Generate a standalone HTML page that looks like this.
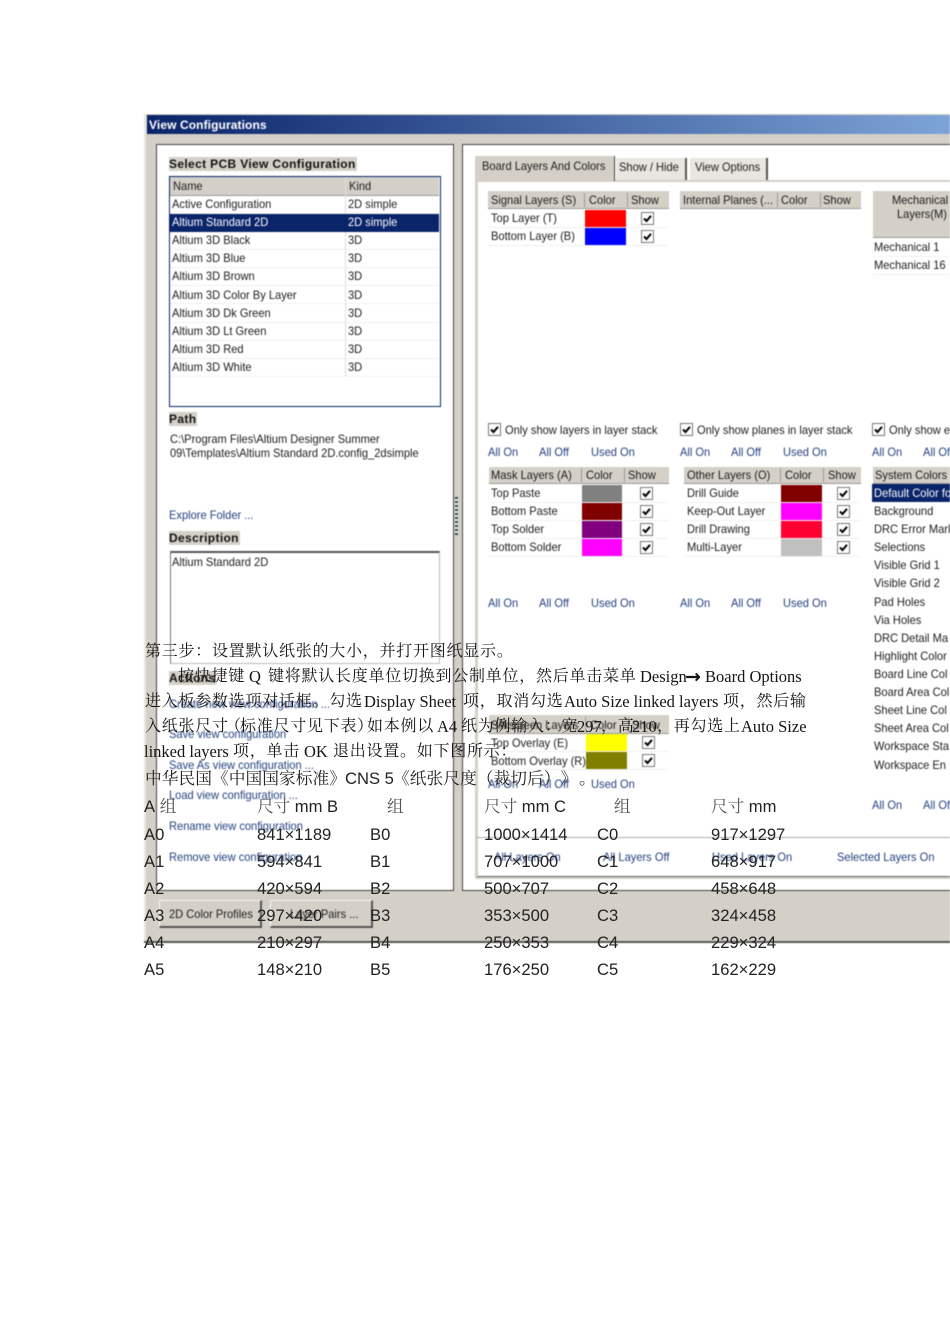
<!DOCTYPE html>
<html><head><meta charset="utf-8">
<style>
html,body{margin:0;padding:0;background:#fff}
#p{position:relative;width:950px;height:1344px;overflow:hidden;background:#fff}
#d{position:absolute;left:0;top:0;width:950px;height:1344px;overflow:hidden;filter:blur(.4px)}
.r{position:absolute}
.t{position:absolute;font:12px/14px "Liberation Sans",sans-serif;height:14px;white-space:nowrap;color:#1c1c1c;transform:scaleX(.925);transform-origin:0 50%}
.l{color:#24407f}
.b{transform:none;font-weight:bold;letter-spacing:.35px;background:#d4d0c8;color:#111;padding-right:1px}
.h{position:absolute;background:#d4d0c8;border-bottom:1px solid #999}
.s{position:absolute;width:1px;background:#999}
.g{position:absolute;height:1px;background:#efefef}
svg.c{position:absolute;width:13px;height:13px}
.x,.z{position:absolute;margin-top:1px;font:16px/20px "Liberation Serif","Noto Serif CJK SC",serif;letter-spacing:.75px;white-space:nowrap;color:#151515;font-kerning:none;text-spacing-trim:space-all}
.z{font-size:16.5px;letter-spacing:0}
.y{position:absolute;font:16.6px/20px "Liberation Sans","Noto Serif CJK SC",sans-serif;white-space:nowrap;color:#222;font-kerning:none;text-spacing-trim:space-all}
.u{color:#555}
</style></head><body><div id="p">
<svg width="0" height="0" style="position:absolute"><defs><g id="k"><rect x=".5" y=".5" width="12" height="12" fill="#fff" stroke="#777"/><path d="M3 6.5l2.5 2.5L10 3.8" fill="none" stroke="#000" stroke-width="2"/></g></defs></svg>
<div id="d">
<div class="r" style="left:144px;top:114px;width:806px;height:827px;background:#d4d0c8;border-bottom:2px solid #555"></div>
<div class="r" style="left:144px;top:114px;width:2px;height:827px;background:#e8e6e0"></div>
<div class="r" style="left:147px;top:115px;width:803px;height:19px;background:linear-gradient(90deg,#0a246a,#7da4d8)"></div>
<span class="t" style="left:149px;top:118px;transform:none;letter-spacing:.1px;font-weight:bold;color:#fff">View Configurations</span>

<div class="r" style="left:156px;top:144px;width:296px;height:745px;background:#fff;border:1px solid #444"></div>
<span class="t b" style="left:169px;top:157px">Select PCB View Configuration</span>
<div class="r" style="left:169px;top:176px;width:270px;height:229px;border:1px solid #0a246a;background:#fff"></div>
<div class="h" style="left:170px;top:177px;width:269px;height:18px"></div>
<div class="s" style="left:345px;top:177px;height:199px;background:#ddd"></div>
<div class="r" style="left:170px;top:214px;width:269px;height:18px;background:#0a246a"></div>
<div class="g" style="left:170px;top:213px;width:269px"></div><div class="g" style="left:170px;top:249px;width:269px"></div><div class="g" style="left:170px;top:267px;width:269px"></div><div class="g" style="left:170px;top:285px;width:269px"></div><div class="g" style="left:170px;top:303px;width:269px"></div><div class="g" style="left:170px;top:322px;width:269px"></div><div class="g" style="left:170px;top:340px;width:269px"></div><div class="g" style="left:170px;top:358px;width:269px"></div><div class="g" style="left:170px;top:376px;width:269px"></div>
<span class="t" style="left:173px;top:179px">Name</span><span class="t" style="left:349px;top:179px">Kind</span>
<span class="t" style="left:172px;top:197px">Active Configuration</span><span class="t" style="left:348px;top:197px">2D simple</span>
<span class="t" style="left:172px;top:215px;color:#fff">Altium Standard 2D</span><span class="t" style="left:348px;top:215px;color:#fff">2D simple</span>
<span class="t" style="left:172px;top:233px">Altium 3D Black</span><span class="t" style="left:348px;top:233px">3D</span>
<span class="t" style="left:172px;top:251px">Altium 3D Blue</span><span class="t" style="left:348px;top:251px">3D</span>
<span class="t" style="left:172px;top:269px">Altium 3D Brown</span><span class="t" style="left:348px;top:269px">3D</span>
<span class="t" style="left:172px;top:288px">Altium 3D Color By Layer</span><span class="t" style="left:348px;top:288px">3D</span>
<span class="t" style="left:172px;top:306px">Altium 3D Dk Green</span><span class="t" style="left:348px;top:306px">3D</span>
<span class="t" style="left:172px;top:324px">Altium 3D Lt Green</span><span class="t" style="left:348px;top:324px">3D</span>
<span class="t" style="left:172px;top:342px">Altium 3D Red</span><span class="t" style="left:348px;top:342px">3D</span>
<span class="t" style="left:172px;top:360px">Altium 3D White</span><span class="t" style="left:348px;top:360px">3D</span>
<span class="t b" style="left:169px;top:412px">Path</span>
<span class="t" style="left:170px;top:432px">C:\Program Files\Altium Designer Summer</span>
<span class="t" style="left:170px;top:446px">09\Templates\Altium Standard 2D.config_2dsimple</span>
<span class="t l" style="left:169px;top:508px">Explore Folder ...</span>
<span class="t b" style="left:169px;top:531px">Description</span>
<div class="r" style="left:170px;top:551px;width:268px;height:110px;border:1px solid #bbb;border-top:2px solid #555;border-left:1px solid #777;background:#fff"></div>
<span class="t" style="left:172px;top:555px">Altium Standard 2D</span>
<span class="t b" style="left:169px;top:671px">Actions</span>
<span class="t l" style="left:169px;top:697px">Create new view configuration ...</span>
<span class="t l" style="left:169px;top:727px">Save view configuration</span>
<span class="t l" style="left:169px;top:758px">Save As view configuration ...</span>
<span class="t l" style="left:169px;top:788px">Load view configuration ...</span>
<span class="t l" style="left:169px;top:819px">Rename view configuration</span>
<span class="t l" style="left:169px;top:850px">Remove view configuration</span>

<div class="r" style="left:455px;top:497px;width:3px;height:38px;background:repeating-linear-gradient(180deg,#33504a 0 2px,#e6efe9 2px 4px)"></div>

<div class="r" style="left:462px;top:144px;width:490px;height:745px;background:#fff;border:1px solid #444"></div>
<div class="r" style="left:475px;top:180px;width:480px;height:698px;background:#fff;border-left:3px solid #d4d0c8;border-top:2px solid #d4d0c8;box-sizing:border-box;border-bottom:2px solid #666"></div>
<div class="r" style="left:476px;top:877px;width:474px;height:2px;background:#d4d0c8"></div>
<div class="r" style="left:475px;top:156px;width:140px;height:25px;background:#d4d0c8;border-right:1px solid #444;box-sizing:border-box"></div>
<div class="r" style="left:616px;top:158px;width:71px;height:22px;background:#e8e6e0;border-right:2px solid #555;box-sizing:border-box"></div>
<div class="r" style="left:690px;top:158px;width:78px;height:22px;background:#e8e6e0;border-right:2px solid #555;box-sizing:border-box"></div>
<span class="t" style="left:482px;top:159px">Board Layers And Colors</span>
<span class="t" style="left:619px;top:160px">Show / Hide</span>
<span class="t" style="left:695px;top:160px">View Options</span>

<!-- Signal -->
<div class="h" style="left:488px;top:191px;width:181px;height:17px"></div><div class="s" style="left:584px;top:193px;height:14px"></div><div class="s" style="left:627px;top:193px;height:14px"></div>
<span class="t" style="left:491px;top:193px">Signal Layers (S)</span><span class="t" style="left:589px;top:193px">Color</span><span class="t" style="left:631px;top:193px">Show</span>
<span class="t" style="left:491px;top:211px">Top Layer (T)</span><span class="t" style="left:491px;top:229px">Bottom Layer (B)</span>
<div class="r" style="left:585px;top:210px;width:41px;height:17px;background:#f00"></div><div class="r" style="left:585px;top:228px;width:41px;height:17px;background:#00f"></div>
<div class="g" style="left:488px;top:227px;width:181px"></div><div class="g" style="left:488px;top:245px;width:181px"></div>
<svg class="c" style="left:641px;top:212px"><use href="#k"/></svg><svg class="c" style="left:641px;top:230px"><use href="#k"/></svg>
<!-- Internal -->
<div class="h" style="left:680px;top:191px;width:181px;height:17px"></div><div class="s" style="left:777px;top:193px;height:14px"></div><div class="s" style="left:820px;top:193px;height:14px"></div>
<span class="t" style="left:683px;top:193px">Internal Planes (...</span><span class="t" style="left:781px;top:193px">Color</span><span class="t" style="left:823px;top:193px">Show</span>
<!-- Mechanical -->
<div class="h" style="left:873px;top:191px;width:77px;height:46px"></div>
<span class="t" style="left:892px;top:193px">Mechanical</span><span class="t" style="left:897px;top:207px">Layers(M)</span>
<span class="t" style="left:874px;top:240px">Mechanical 1</span><span class="t" style="left:874px;top:258px">Mechanical 16</span>
<div class="g" style="left:873px;top:256px;width:77px"></div><div class="g" style="left:873px;top:274px;width:77px"></div>

<svg class="c" style="left:488px;top:423px"><use href="#k"/></svg><span class="t" style="left:505px;top:423px">Only show layers in layer stack</span>
<svg class="c" style="left:680px;top:423px"><use href="#k"/></svg><span class="t" style="left:697px;top:423px">Only show planes in layer stack</span>
<svg class="c" style="left:872px;top:423px"><use href="#k"/></svg><span class="t" style="left:889px;top:423px">Only show e</span>
<span class="t l" style="left:488px;top:445px">All On</span><span class="t l" style="left:539px;top:445px">All Off</span><span class="t l" style="left:591px;top:445px">Used On</span>
<span class="t l" style="left:680px;top:445px">All On</span><span class="t l" style="left:731px;top:445px">All Off</span><span class="t l" style="left:783px;top:445px">Used On</span>
<span class="t l" style="left:872px;top:445px">All On</span><span class="t l" style="left:923px;top:445px">All Off</span>

<!-- Mask -->
<div class="h" style="left:489px;top:467px;width:180px;height:16px"></div><div class="s" style="left:581px;top:468px;height:14px"></div><div class="s" style="left:624px;top:468px;height:14px"></div>
<span class="t" style="left:491px;top:468px">Mask Layers (A)</span><span class="t" style="left:586px;top:468px">Color</span><span class="t" style="left:628px;top:468px">Show</span>
<span class="t" style="left:491px;top:486px">Top Paste</span><span class="t" style="left:491px;top:504px">Bottom Paste</span><span class="t" style="left:491px;top:522px">Top Solder</span><span class="t" style="left:491px;top:540px">Bottom Solder</span>
<div class="r" style="left:582px;top:485px;width:40px;height:17px;background:#808080"></div><div class="r" style="left:582px;top:503px;width:40px;height:17px;background:#800000"></div><div class="r" style="left:582px;top:521px;width:40px;height:17px;background:#800080"></div><div class="r" style="left:582px;top:539px;width:40px;height:17px;background:#f0f"></div>
<div class="g" style="left:489px;top:502px;width:180px"></div><div class="g" style="left:489px;top:520px;width:180px"></div><div class="g" style="left:489px;top:538px;width:180px"></div><div class="g" style="left:489px;top:556px;width:180px"></div>
<svg class="c" style="left:640px;top:487px"><use href="#k"/></svg><svg class="c" style="left:640px;top:505px"><use href="#k"/></svg><svg class="c" style="left:640px;top:523px"><use href="#k"/></svg><svg class="c" style="left:640px;top:541px"><use href="#k"/></svg>
<!-- Other -->
<div class="h" style="left:684px;top:467px;width:177px;height:16px"></div><div class="s" style="left:780px;top:468px;height:14px"></div><div class="s" style="left:823px;top:468px;height:14px"></div>
<span class="t" style="left:687px;top:468px">Other Layers (O)</span><span class="t" style="left:785px;top:468px">Color</span><span class="t" style="left:828px;top:468px">Show</span>
<span class="t" style="left:687px;top:486px">Drill Guide</span><span class="t" style="left:687px;top:504px">Keep-Out Layer</span><span class="t" style="left:687px;top:522px">Drill Drawing</span><span class="t" style="left:687px;top:540px">Multi-Layer</span>
<div class="r" style="left:781px;top:485px;width:41px;height:17px;background:#800000"></div><div class="r" style="left:781px;top:503px;width:41px;height:17px;background:#f0f"></div><div class="r" style="left:781px;top:521px;width:41px;height:17px;background:#ff0033"></div><div class="r" style="left:781px;top:539px;width:41px;height:17px;background:#c0c0c0"></div>
<div class="g" style="left:684px;top:502px;width:177px"></div><div class="g" style="left:684px;top:520px;width:177px"></div><div class="g" style="left:684px;top:538px;width:177px"></div><div class="g" style="left:684px;top:556px;width:177px"></div>
<svg class="c" style="left:837px;top:487px"><use href="#k"/></svg><svg class="c" style="left:837px;top:505px"><use href="#k"/></svg><svg class="c" style="left:837px;top:523px"><use href="#k"/></svg><svg class="c" style="left:837px;top:541px"><use href="#k"/></svg>
<!-- System -->
<div class="h" style="left:873px;top:467px;width:77px;height:16px"></div><span class="t" style="left:875px;top:468px">System Colors |</span>
<div class="r" style="left:872px;top:484px;width:78px;height:18px;background:#0a246a"></div>
<span class="t" style="left:874px;top:486px;color:#fff">Default Color fo</span>
<span class="t" style="left:874px;top:504px">Background</span><span class="t" style="left:874px;top:522px">DRC Error Mark</span><span class="t" style="left:874px;top:540px">Selections</span><span class="t" style="left:874px;top:558px">Visible Grid 1</span><span class="t" style="left:874px;top:576px">Visible Grid 2</span><span class="t" style="left:874px;top:595px">Pad Holes</span><span class="t" style="left:874px;top:613px">Via Holes</span><span class="t" style="left:874px;top:631px">DRC Detail Ma</span><span class="t" style="left:874px;top:649px">Highlight Color</span><span class="t" style="left:874px;top:667px">Board Line Col</span><span class="t" style="left:874px;top:685px">Board Area Col</span><span class="t" style="left:874px;top:703px">Sheet Line Col</span><span class="t" style="left:874px;top:721px">Sheet Area Col</span><span class="t" style="left:874px;top:739px">Workspace Sta</span><span class="t" style="left:874px;top:758px">Workspace En</span>
<span class="t l" style="left:488px;top:596px">All On</span><span class="t l" style="left:539px;top:596px">All Off</span><span class="t l" style="left:591px;top:596px">Used On</span>
<span class="t l" style="left:680px;top:596px">All On</span><span class="t l" style="left:731px;top:596px">All Off</span><span class="t l" style="left:783px;top:596px">Used On</span>
<span class="t l" style="left:872px;top:798px">All On</span><span class="t l" style="left:923px;top:798px">All Off</span>
<!-- Silkscreen -->
<div class="h" style="left:489px;top:715px;width:180px;height:18px"></div><div class="s" style="left:585px;top:717px;height:14px"></div><div class="s" style="left:628px;top:717px;height:14px"></div>
<span class="t" style="left:491px;top:718px">Silkscreen Layers</span><span class="t" style="left:590px;top:718px">Color</span><span class="t" style="left:632px;top:718px">Show</span>
<span class="t" style="left:491px;top:736px">Top Overlay (E)</span><span class="t" style="left:491px;top:754px">Bottom Overlay (R)</span>
<div class="r" style="left:586px;top:734px;width:41px;height:17px;background:#ff0"></div><div class="r" style="left:586px;top:752px;width:41px;height:17px;background:#808000"></div>
<div class="g" style="left:489px;top:751px;width:180px"></div><div class="g" style="left:489px;top:769px;width:180px"></div>
<svg class="c" style="left:642px;top:736px"><use href="#k"/></svg><svg class="c" style="left:642px;top:754px"><use href="#k"/></svg>
<span class="t l" style="left:488px;top:777px">All On</span><span class="t l" style="left:539px;top:777px">All Off</span><span class="t l" style="left:591px;top:777px">Used On</span>

<div class="r" style="left:476px;top:837px;width:474px;height:1px;background:#aaa"></div>
<span class="t l" style="left:494px;top:850px">All Layers On</span><span class="t l" style="left:603px;top:850px">All Layers Off</span><span class="t l" style="left:712px;top:850px">Used Layers On</span><span class="t l" style="left:837px;top:850px">Selected Layers On</span>

<div class="r" style="left:159px;top:900px;width:103px;height:28px;background:#d4d0c8;border-top:1px solid #f4f4f0;border-left:1px solid #f4f4f0;border-right:2px solid #555;border-bottom:2px solid #555;box-sizing:border-box"></div>
<div class="r" style="left:270px;top:900px;width:103px;height:28px;background:#d4d0c8;border-top:1px solid #f4f4f0;border-left:1px solid #f4f4f0;border-right:2px solid #555;border-bottom:2px solid #555;box-sizing:border-box"></div>
<span class="t" style="left:169px;top:907px">2D Color Profiles</span><span class="t" style="left:290px;top:907px">Layer Pairs ...</span>
</div>

<div class="x" style="left:145px;top:641px">第三步：设置默认纸张的大小，并打开图纸显示。</div>

<div class="x" style="left:178px;top:666px">按快捷键</div><div class="z" style="left:249px;top:666px">Q</div><div class="x" style="left:268px;top:666px">键将默认长度单位切换到公制单位，然后单击菜单</div><div class="z" style="left:640px;top:666px">Design</div><div class="r" style="left:685px;top:667px;font:bold 19px/20px 'DejaVu Sans',sans-serif;color:#151515">→</div><div class="z" style="left:705px;top:666px">Board Options</div>

<div class="x" style="left:145px;top:691px">进入板参数选项对话框。勾选</div><div class="z" style="left:364px;top:691px">Display Sheet</div><div class="x" style="left:463px;top:691px">项，取消勾选</div><div class="z" style="left:564px;top:691px">Auto Size linked layers</div><div class="x" style="left:723px;top:691px">项，然后输</div>

<div class="x" style="left:145px;top:716px">入纸张尺寸</div><div class="x" style="left:225px;top:716px">（</div><div class="x" style="left:240px;top:716px">标准尺寸见下表</div><div class="x" style="left:357px;top:716px">）</div><div class="x" style="left:367px;top:716px">如本例以</div><div class="z" style="left:437px;top:716px">A4</div><div class="x" style="left:461px;top:716px">纸为例输入：宽</div><div class="z" style="left:577px;top:716px">297</div><div class="x" style="left:601px;top:716px">，高</div><div class="z" style="left:632px;top:716px">210</div><div class="x" style="left:657px;top:716px">，再勾选上</div><div class="z" style="left:741px;top:716px">Auto Size</div>

<div class="z" style="left:144px;top:741px">linked layers</div><div class="x" style="left:233px;top:741px">项，单击</div><div class="z" style="left:304px;top:741px">OK</div><div class="x" style="left:333px;top:741px">退出设置。如下图所示：</div>

<div class="y" style="left:145px;top:769px;font-size:16.75px">中华民国《中国国家标准》</div><div class="y" style="left:345px;top:769px">CNS 5</div><div class="y" style="left:393px;top:769px;font-size:16.75px">《纸张尺度（裁切后）》</div><div class="y" style="left:579px;top:769px;font-size:16.75px">。</div>

<div class="y" style="left:144px;top:797px">A <span class="u">组</span></div><div class="y" style="left:257px;top:797px"><span class="u">尺寸</span> mm B</div><div class="y u" style="left:387px;top:797px">组</div><div class="y" style="left:484px;top:797px"><span class="u">尺寸</span> mm C</div><div class="y u" style="left:614px;top:797px">组</div><div class="y" style="left:711px;top:797px"><span class="u">尺寸</span> mm</div>
<div class="y" style="left:144px;top:825px">A0</div><div class="y" style="left:257px;top:825px">841×1189</div><div class="y" style="left:370px;top:825px">B0</div><div class="y" style="left:484px;top:825px">1000×1414</div><div class="y" style="left:597px;top:825px">C0</div><div class="y" style="left:711px;top:825px">917×1297</div>
<div class="y" style="left:144px;top:852px">A1</div><div class="y" style="left:257px;top:852px">594×841</div><div class="y" style="left:370px;top:852px">B1</div><div class="y" style="left:484px;top:852px">707×1000</div><div class="y" style="left:597px;top:852px">C1</div><div class="y" style="left:711px;top:852px">648×917</div>
<div class="y" style="left:144px;top:879px">A2</div><div class="y" style="left:257px;top:879px">420×594</div><div class="y" style="left:370px;top:879px">B2</div><div class="y" style="left:484px;top:879px">500×707</div><div class="y" style="left:597px;top:879px">C2</div><div class="y" style="left:711px;top:879px">458×648</div>
<div class="y" style="left:144px;top:906px">A3</div><div class="y" style="left:257px;top:906px">297×420</div><div class="y" style="left:370px;top:906px">B3</div><div class="y" style="left:484px;top:906px">353×500</div><div class="y" style="left:597px;top:906px">C3</div><div class="y" style="left:711px;top:906px">324×458</div>
<div class="y" style="left:144px;top:933px">A4</div><div class="y" style="left:257px;top:933px">210×297</div><div class="y" style="left:370px;top:933px">B4</div><div class="y" style="left:484px;top:933px">250×353</div><div class="y" style="left:597px;top:933px">C4</div><div class="y" style="left:711px;top:933px">229×324</div>
<div class="y" style="left:144px;top:960px">A5</div><div class="y" style="left:257px;top:960px">148×210</div><div class="y" style="left:370px;top:960px">B5</div><div class="y" style="left:484px;top:960px">176×250</div><div class="y" style="left:597px;top:960px">C5</div><div class="y" style="left:711px;top:960px">162×229</div>
</div></body></html>
